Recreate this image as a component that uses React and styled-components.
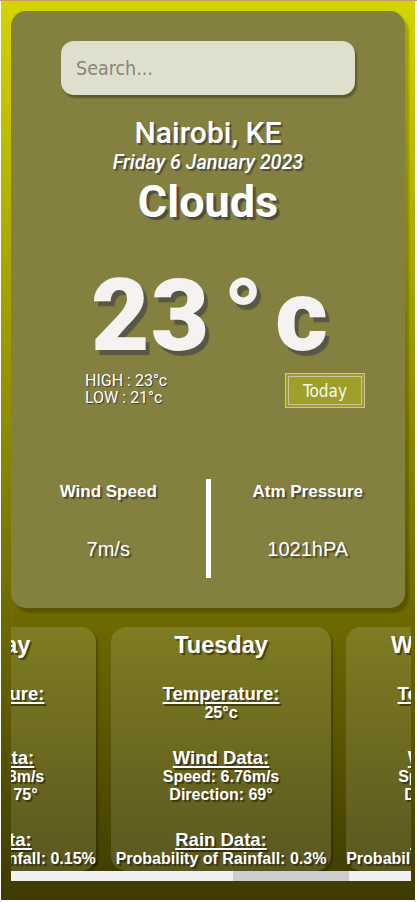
import React, { useLayoutEffect, useRef, useState } from "react";
import styled, { createGlobalStyle } from "styled-components";

const GlobalStyle = createGlobalStyle`
  html {
    background: #ffffff;
  }
  body {
    margin: 0;
    border-top: 1px solid #c79c62;
    font-family: "Liberation Sans", Arial, sans-serif;
  }
  * {
    box-sizing: border-box;
  }
`;

// forecast data
const forecast = [
  { day: "Saturday", temp: 24, speed: 5.41, dir: 81, rain: 0.2 },
  { day: "Sunday", temp: 23, speed: 6.02, dir: 72, rain: 0.12 },
  { day: "Monday", temp: 24, speed: 5.88, dir: 75, rain: 0.15 },
  { day: "Tuesday", temp: 25, speed: 6.76, dir: 69, rain: 0.3 },
  { day: "Wednesday", temp: 24, speed: 6.11, dir: 70, rain: 0.22 },
];

function App() {
  const scrollRef = useRef(null);
  const [thumb, setThumb] = useState({ left: 0, width: 0 });

  // scroll the strip and size the scroll indicator from it
  const updateThumb = () => {
    const el = scrollRef.current;
    if (!el) return;
    const track = el.clientWidth;
    const width = (track * track) / el.scrollWidth;
    const max = el.scrollWidth - track;
    const left = max > 0 ? (el.scrollLeft / max) * (track - width) : 0;
    setThumb({ left, width });
  };

  useLayoutEffect(() => {
    if (scrollRef.current) {
      scrollRef.current.scrollLeft = 765;
      updateThumb();
    }
  }, []);

  return (
    <>
      <GlobalStyle />
      <Page>
        <MainCard>
          <SearchInput type="text" placeholder="Search..." autoFocus />
          <Location>Nairobi, KE</Location>
          <DateLine>Friday 6 January 2023</DateLine>
          <Condition>Clouds</Condition>
          <Temperature>
            23<Degree>°</Degree>c
          </Temperature>
          <RangeRow>
            <HighLow>
              <span>HIGH : 23°c</span>
              <span>LOW : 21°c</span>
            </HighLow>
            <TodayButton>Today</TodayButton>
          </RangeRow>
          <StatsRow>
            <Stat>
              <StatLabel>Wind Speed</StatLabel>
              <StatValue>7m/s</StatValue>
            </Stat>
            <Divider />
            <Stat>
              <StatLabel>Atm Pressure</StatLabel>
              <StatValue>1021hPA</StatValue>
            </Stat>
          </StatsRow>
        </MainCard>

        <ForecastWrap>
          <ForecastStrip ref={scrollRef} onScroll={updateThumb}>
            {forecast.map((f) => (
              <ForecastCard key={f.day}>
                <DayName>{f.day}</DayName>
                <Section>
                  <SectionTitle>Temperature:</SectionTitle>
                  <SectionLine>{f.temp}°c</SectionLine>
                </Section>
                <Section>
                  <SectionTitle>Wind Data:</SectionTitle>
                  <SectionLine>Speed: {f.speed}m/s</SectionLine>
                  <SectionLine>Direction: {f.dir}°</SectionLine>
                </Section>
                <Section>
                  <SectionTitle>Rain Data:</SectionTitle>
                  <SectionLine>Probability of Rainfall: {f.rain}%</SectionLine>
                </Section>
              </ForecastCard>
            ))}
          </ForecastStrip>
          <ScrollTrack>
            <ScrollThumb
              style={{ marginLeft: thumb.left, width: thumb.width }}
            />
          </ScrollTrack>
        </ForecastWrap>
      </Page>
    </>
  );
}

const Page = styled.div`
  margin: 0 2px 1px 1px;
  height: 899px;
  padding: 10px 4px 0 10px;
  background: linear-gradient(180deg, #d4d400 0%, #3e3a00 100%);
  display: flex;
  flex-direction: column;
  gap: 19px;
`;

const MainCard = styled.div`
  width: 394px;
  background-color: #848040;
  border-radius: 15px;
  box-shadow: 4px 5px 2px rgba(0, 0, 0, 0.2);
  padding: 30px 0 30px;
  display: flex;
  flex-direction: column;
  align-items: center;
  color: #ffffff;
`;

const SearchInput = styled.input`
  width: 294px;
  height: 54px;
  border: none;
  outline: none;
  border-radius: 13px;
  background-color: #dfdfcd;
  box-shadow: 2px 3px 2px rgba(0, 0, 0, 0.3);
  padding: 0 15px;
  font-family: "DejaVu Sans Condensed", "DejaVu Sans", sans-serif;
  font-size: 19.5px;
  color: #333;
  caret-color: #222;
  &::placeholder {
    color: #86867c;
  }
`;

const Location = styled.h2`
  margin: 22px 0 0;
  font-family: Roboto, sans-serif;
  font-weight: 500;
  font-size: 30px;
  line-height: 32px;
  text-shadow: 2px 2px 1px rgba(60, 60, 60, 0.75);
`;

const DateLine = styled.div`
  font-family: Roboto, sans-serif;
  font-style: italic;
  font-weight: 500;
  font-size: 19.8px;
  line-height: 28px;
  text-shadow: 2px 2px 1px rgba(60, 60, 60, 0.75);
`;

const Condition = styled.h1`
  margin: 0;
  font-family: Roboto, sans-serif;
  font-weight: 700;
  font-size: 45px;
  line-height: 50px;
  text-shadow: 3px 3px 1px rgba(60, 60, 60, 0.75);
`;

const Temperature = styled.div`
  margin-top: 39px;
  font-family: Roboto, sans-serif;
  font-weight: 900;
  font-size: 101px;
  line-height: 100px;
  letter-spacing: 1px;
  color: #f5f2f2;
  text-shadow: 4px 5px 1px rgba(70, 70, 70, 0.7);
  padding-left: 4px;
`;

const Degree = styled.span`
  margin: 0 11px 0 13px;
`;

const RangeRow = styled.div`
  width: 100%;
  margin-top: 7px;
  padding: 0 40px 0 74px;
  display: flex;
  justify-content: space-between;
  align-items: flex-start;
`;

const HighLow = styled.div`
  display: flex;
  flex-direction: column;
  margin-top: -1px;
  font-family: Roboto, sans-serif;
  font-size: 16px;
  line-height: 17px;
  text-shadow: 1px 1px 1px rgba(40, 40, 40, 0.8);
`;

const TodayButton = styled.button`
  width: 80px;
  height: 35px;
  border: 4px double #cbc3a2;
  background-color: #9e9e2b;
  color: #f7f7f0;
  font-family: "DejaVu Sans Condensed", "DejaVu Sans", sans-serif;
  font-size: 17px;
  padding: 0;
  cursor: pointer;
`;

const StatsRow = styled.div`
  width: 100%;
  margin-top: 71px;
  display: grid;
  grid-template-columns: 1fr 5px 1fr;
  height: 99px;
`;

const Stat = styled.div`
  display: flex;
  flex-direction: column;
  align-items: center;
  gap: 32px;
`;

const StatLabel = styled.div`
  font-family: "Liberation Sans", Arial, sans-serif;
  font-weight: 700;
  font-size: 17px;
  line-height: 26px;
  text-shadow: 2px 2px 1px rgba(40, 40, 40, 0.6);
`;

const StatValue = styled.div`
  font-family: "Liberation Sans", Arial, sans-serif;
  font-size: 20px;
  line-height: 24px;
  text-shadow: 2px 2px 1px rgba(40, 40, 40, 0.6);
`;

const Divider = styled.div`
  background-color: #ffffff;
`;

const ForecastWrap = styled.div`
  width: 400px;
  display: flex;
  flex-direction: column;
`;

const ForecastStrip = styled.div`
  display: flex;
  gap: 15px;
  overflow-x: auto;
  overflow-y: hidden;
  scrollbar-width: none;
  padding: 0 59px 0 160px;
  &::-webkit-scrollbar {
    display: none;
  }
`;

const ScrollTrack = styled.div`
  height: 10px;
  background-color: #f0f0f0;
  display: flex;
`;

const ScrollThumb = styled.div`
  height: 100%;
  background-color: #cdcdcd;
`;

const ForecastCard = styled.div`
  flex: 0 0 220px;
  height: 244px;
  border-radius: 15px;
  background-color: rgba(255, 255, 255, 0.13);
  box-shadow: 2px 2px 2px rgba(0, 0, 0, 0.25);
  padding-top: 5px;
  display: flex;
  flex-direction: column;
  align-items: center;
  gap: 26px;
  color: #ffffff;
  font-family: "Liberation Sans", Arial, sans-serif;
  font-weight: 700;
  text-shadow: 2px 2px 1px rgba(0, 0, 0, 0.45);
  white-space: nowrap;
`;

const DayName = styled.div`
  font-size: 23.5px;
  line-height: 26px;
`;

const Section = styled.div`
  display: flex;
  flex-direction: column;
  align-items: center;
`;

const SectionTitle = styled.div`
  font-size: 18.5px;
  line-height: 20px;
  text-decoration: underline;
  text-decoration-thickness: 2px;
  text-underline-offset: 2px;
`;

const SectionLine = styled.div`
  font-size: 16px;
  line-height: 18px;
`;

export default App;
